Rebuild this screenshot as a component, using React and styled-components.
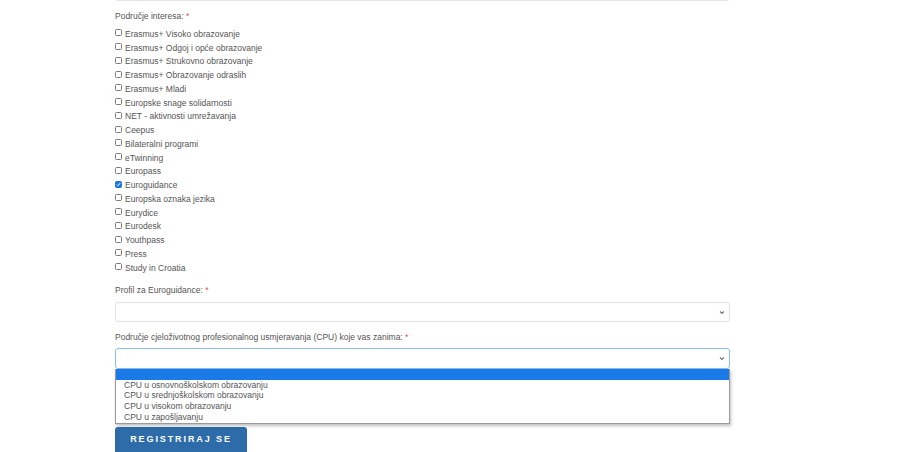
import styled, { createGlobalStyle } from "styled-components";

const GlobalStyle = createGlobalStyle`
  html, body {
    margin: 0;
    padding: 0;
    background: #fff;
    overflow: hidden;
  }
  body {
    font-family: "Liberation Sans", Arial, sans-serif;
  }
`;

const Page = styled.div`
  width: 919px;
  height: 452px;
  overflow: hidden;
`;

const Form = styled.form`
  width: 615px;
  margin-left: 115px;
  display: flex;
  flex-direction: column;
`;

const TopInput = styled.input`
  box-sizing: border-box;
  width: 100%;
  height: 20px;
  margin-top: -19px;
  border: 1px solid #e3e3e3;
  border-radius: 3px;
  background: #fff;
`;

const Label = styled.label`
  display: block;
  font-size: 8.5px;
  line-height: 11px;
  color: #555;
  margin-top: ${(p) => p.$top || 0}px;
`;

const Star = styled.span`
  color: #d9534f;
`;

const CheckList = styled.div`
  display: flex;
  flex-direction: column;
  margin-top: 5px;
`;

const CheckRow = styled.label`
  display: flex;
  align-items: center;
  height: 13.76px;
  font-size: 8.5px;
  color: #555;
`;

const Box = styled.span`
  box-sizing: border-box;
  width: 7px;
  height: 7px;
  margin: 0 3px 2px 0;
  flex-shrink: 0;
  border: 1px solid ${(p) => (p.$checked ? "#1a73e8" : "#7a7a7a")};
  border-radius: 1.5px;
  background: ${(p) => (p.$checked ? "#1a73e8" : "#fff")};
  display: flex;
  align-items: center;
  justify-content: center;
`;

const Select = styled.select`
  box-sizing: border-box;
  width: 100%;
  height: ${(p) => (p.$focused ? 21 : 20)}px;
  margin-top: ${(p) => p.$top || 0}px;
  border: 1px solid ${(p) => (p.$focused ? "#8dbbf0" : "#e3e3e3")};
  border-radius: 3px;
  background: #fff;
  font-size: 8.5px;
  color: #555;
  outline: none;
  padding: 0 4px;
  appearance: none;
`;

const SelectWrap = styled.div`
  position: relative;
  display: flex;
  flex-direction: column;
`;

const Chevron = styled.svg`
  position: absolute;
  right: 5px;
  bottom: ${(p) => (p.$focused ? 8 : 7)}px;
  width: 6px;
  height: 5px;
  pointer-events: none;
`;

const Dropdown = styled.ul`
  position: absolute;
  left: 0;
  right: 0;
  top: 100%;
  margin: 0;
  padding: 0 0 1px;
  list-style: none;
  background: #fff;
  border: 1px solid #9a9a9a;
  border-top: none;
  box-shadow: 1px 2px 3px rgba(0, 0, 0, 0.25);
  z-index: 2;
`;

const Option = styled.li`
  height: ${(p) => (p.$active ? 11 : 10.7)}px;
  line-height: 10.7px;
  padding-left: 8px;
  font-size: 8.5px;
  color: #555;
  background: ${(p) => (p.$active ? "#1a7ae8" : "transparent")};
  white-space: nowrap;
`;

const Button = styled.button`
  width: 132px;
  height: 30px;
  margin-top: 58px;
  border: none;
  border-radius: 3px;
  background: #2d6ca8;
  color: #fff;
  font-family: "Liberation Sans", Arial, sans-serif;
  font-weight: bold;
  font-size: 9px;
  letter-spacing: 1.9px;
  padding: 0 0 5px;
  cursor: pointer;
`;

const interests = [
  "Erasmus+ Visoko obrazovanje",
  "Erasmus+ Odgoj i opće obrazovanje",
  "Erasmus+ Strukovno obrazovanje",
  "Erasmus+ Obrazovanje odraslih",
  "Erasmus+ Mladi",
  "Europske snage solidarnosti",
  "NET - aktivnosti umrežavanja",
  "Ceepus",
  "Bilateralni programi",
  "eTwinning",
  "Europass",
  "Euroguidance",
  "Europska oznaka jezika",
  "Eurydice",
  "Eurodesk",
  "Youthpass",
  "Press",
  "Study in Croatia",
];

const cpuOptions = [
  "",
  "CPU u osnovnoškolskom obrazovanju",
  "CPU u srednjoškolskom obrazovanju",
  "CPU u visokom obrazovanju",
  "CPU u zapošljavanju",
];

const ArrowIcon = ({ focused }) => (
  <Chevron viewBox="0 0 6 5" $focused={focused}>
    <path d="M1 1.5 L3 3.5 L5 1.5" fill="none" stroke="#777" strokeWidth="1.1" />
  </Chevron>
);

const App = () => {
  return (
    <Page>
      <GlobalStyle />
      <Form onSubmit={(e) => e.preventDefault()}>
        <TopInput />
        <Label $top={10}>
          Područje interesa: <Star>*</Star>
        </Label>
        <CheckList>
          {interests.map((item) => {
            const checked = item === "Euroguidance";
            return (
              <CheckRow key={item}>
                <Box $checked={checked}>
                  {checked && (
                    <svg width="5" height="5" viewBox="0 0 5 5">
                      <path
                        d="M0.8 2.6 L2 3.8 L4.3 1"
                        fill="none"
                        stroke="#fff"
                        strokeWidth="1"
                      />
                    </svg>
                  )}
                </Box>
                {item}
              </CheckRow>
            );
          })}
        </CheckList>
        <Label $top={10}>
          Profil za Euroguidance: <Star>*</Star>
        </Label>
        <SelectWrap>
          <Select $top={6}>
            <option></option>
          </Select>
          <ArrowIcon />
        </SelectWrap>
        <Label $top={10}>
          Područje cjeloživotnog profesionalnog usmjeravanja (CPU) koje vas
          zanima: <Star>*</Star>
        </Label>
        <SelectWrap>
          <Select $top={5} $focused>
            <option></option>
          </Select>
          <ArrowIcon focused />
          <Dropdown>
            {cpuOptions.map((opt, i) => (
              <Option key={i} $active={i === 0}>
                {opt}
              </Option>
            ))}
          </Dropdown>
        </SelectWrap>
        <Button>REGISTRIRAJ SE</Button>
      </Form>
    </Page>
  );
};

export default App;
